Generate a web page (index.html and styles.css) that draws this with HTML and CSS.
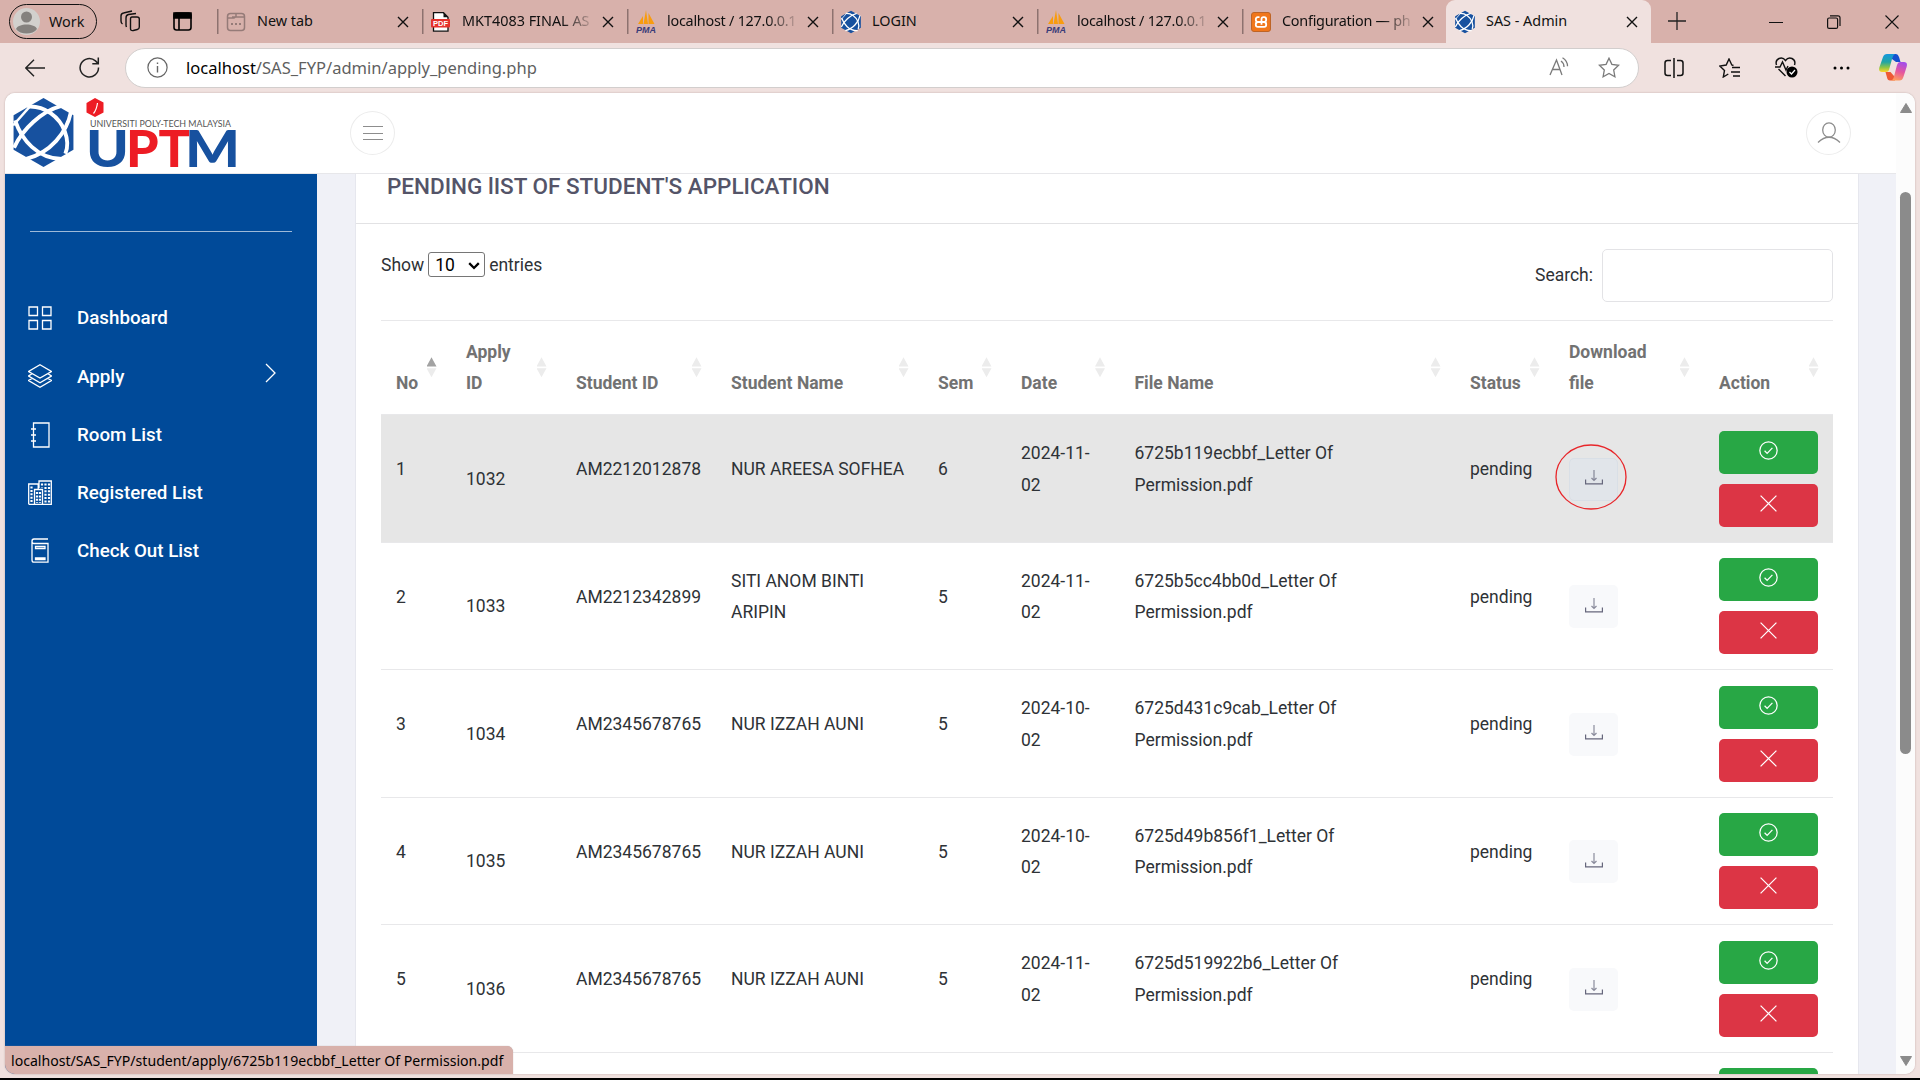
FILE: index.html
```html
<!DOCTYPE html>
<html lang="en">
<head>
<meta charset="utf-8">
<title>SAS - Admin</title>
<link rel="stylesheet" href="styles.css">
</head>
<body>
<svg class="defs" width="0" height="0">
  <defs>
    <symbol id="hex" viewBox="0 0 60 68">
      <path fill="#17519f" d="M30 0 59.500 17v34L30 68 .5 51V17z"/>
      <g fill="none" stroke="#fff" stroke-width="3.800">
        <path d="M14 8.500C31 7 46 19 51 33c3 8 3.500 15 .5 22"/>
        <path d="M47 8C28 13 9 31 1 49"/>
        <path d="M2 22C8 40 24 61 50 60"/>
        <path d="M57 14C53 34 37 54 13 60"/>
        <path d="M0 27 16 9" stroke-width="2.400"/>
      </g>
    </symbol>
    <symbol id="pma" viewBox="0 0 20 24">
      <path fill="#f89c0e" d="M2 14 7 6v8zM7.500 14 10 0l2 14zM12.500 14V3l6 11z"/>
      <text x="0" y="23" textLength="20" lengthAdjust="spacingAndGlyphs" font-family="Liberation Sans" font-size="9.500" font-weight="700" font-style="italic" fill="#3b3c78">PMA</text>
    </symbol>
    <symbol id="x" viewBox="0 0 12 12"><path d="m1 1 10 10M11 1 1 11" fill="none" stroke="#111" stroke-width="1.400"/></symbol>
    <symbol id="check" viewBox="0 0 18 18"><g fill="none" stroke="#fff" stroke-width="1.200"><circle cx="9" cy="9" r="8.200"/><path d="m5.300 9.300 2.400 2.400 5-5.200"/></g></symbol>
    <symbol id="cross" viewBox="0 0 18 18"><path d="m1.500 1.500 15 15M16.500 1.500l-15 15" fill="none" stroke="#fff" stroke-width="1.200"/></symbol>
    <symbol id="download" viewBox="0 0 18 18"><g fill="none" stroke="#66677c" stroke-width="1.200"><path d="M.6 11.500v4.400h16.800v-4.400"/><path d="M9 2v10M6.500 10 9 12.500l2.500-2.500" opacity=".75"/></g></symbol>
  </defs>
</svg>
<div class="browser">
  <div class="tabstrip">
    <div class="profile">
      <svg width="27" height="27" viewBox="0 0 27 27"><circle cx="13.500" cy="13.500" r="13.500" fill="#d2d0cd"/><circle cx="13.500" cy="9" r="5.500" fill="#85817e"/><path d="M3 21c2-6 19-6 21 0-4 6-17 6-21 0z" fill="#85817e"/></svg>
      <span>Work</span>
    </div>
    <svg class="workspaces" width="22" height="22" viewBox="0 0 22 22" fill="none" stroke="#111" stroke-width="1.400"><path d="M13 7h5q2.300 0 2.300 2v8q0 2-2 2.500l-4 1q-2.800.5-2.800-2V9q0-2 1.500-2zM7.500 17q-.5-1-.5-2V8q0-3 2.500-3.500L17 3.500M3.500 14Q2 13 2 11V6q0-2.500 2.500-3L13 1"/></svg>
    <svg class="tabactions" width="19" height="19" viewBox="0 0 19 19" fill="none" stroke="#000" stroke-width="1.600"><rect x="1" y="1" width="17" height="17" rx="2.500"/><path d="M1 1h17v5H1z" fill="#000"/><path d="M6 5v13"/></svg>
    <div class="tab"><svg class="fav" width="20" height="20" viewBox="0 0 20 20" fill="none" stroke="#957b78" stroke-width="1.500"><rect x="1.500" y="1.500" width="17" height="17" rx="3"/><path d="M2 6h6l2-1.500V2M6 5h12"/><path d="M5 12h10" stroke-width="2" stroke-dasharray="2 2"/></svg><span class="label">New tab</span><svg class="close"><use href="#x"/></svg></div>
    <div class="tab"><svg class="fav" width="20" height="20" viewBox="0 0 20 20"><path d="M2.500.7h10l4.500 4.500v14H2.500z" fill="#fff" stroke="#111" stroke-width="1.300"/><path d="M12.500.7v4.500H17" fill="#111"/><rect x="0" y="7" width="19" height="8.500" rx="1" fill="#e5322d"/><text x="2" y="14" textLength="15" lengthAdjust="spacingAndGlyphs" font-family="Liberation Sans" font-size="7.500" font-weight="700" fill="#fff">PDF</text></svg><span class="label fade wide">MKT4083 FINAL AS</span><svg class="close"><use href="#x"/></svg></div>
    <div class="tab"><svg class="fav pma"><use href="#pma"/></svg><span class="label fade">localhost / 127.0.0.1</span><svg class="close"><use href="#x"/></svg></div>
    <div class="tab"><svg class="fav hx"><use href="#hex"/></svg><span class="label">LOGIN</span><svg class="close"><use href="#x"/></svg></div>
    <div class="tab"><svg class="fav pma"><use href="#pma"/></svg><span class="label fade">localhost / 127.0.0.1</span><svg class="close"><use href="#x"/></svg></div>
    <div class="tab"><svg class="fav" width="20" height="20" viewBox="0 0 20 20"><rect x=".5" y=".5" width="19" height="19" rx="2.500" fill="#f0761b" stroke="#bd6427"/><path d="M8.500 5.200H6.800Q4.800 5.200 4.800 7.600T7 10Q4.800 10 4.800 12.400t2 2.400h6.400q2 0 2-2.400T13 10q2.200 0 2.200-2.400t-2-2.400h-.7q-2 0-2 2v5.600M7 10h6" fill="none" stroke="#fff" stroke-width="1.800"/></svg><span class="label fade">Configuration — ph</span><svg class="close"><use href="#x"/></svg></div>
    <div class="tab active"><svg class="fav hx"><use href="#hex"/></svg><span class="label">SAS - Admin</span><svg class="close"><use href="#x"/></svg></div>
    <svg class="newtab" width="18" height="18" viewBox="0 0 18 18"><path d="M9 0v18M0 9h18" stroke="#222" stroke-width="1.300"/></svg>
    <div class="winbtns">
      <svg width="14" height="14" viewBox="0 0 14 14"><path d="M0 7.500h14" stroke="#111"/></svg>
      <svg width="14" height="14" viewBox="0 0 14 14" fill="none" stroke="#111" stroke-width="1.200"><rect x=".6" y="3" width="10" height="10.400" rx="1.500"/><path d="M3 .8h8q2 0 2 2V11"/></svg>
      <svg width="14" height="14" viewBox="0 0 14 14"><path d="m.5.5 13 13M13.500.5l-13 13" stroke="#111" stroke-width="1.100"/></svg>
    </div>
  </div>
  <div class="toolbar">
    <svg class="back" width="20" height="18" viewBox="0 0 20 18" fill="none" stroke="#222" stroke-width="1.400"><path d="M20 9H1M9 .8.800 9 9 17.200"/></svg>
    <svg class="reload" width="21" height="21" viewBox="0 0 21 21" fill="none" stroke="#222" stroke-width="1.500"><path d="M19.500 10.500a9.200 9.200 0 1 1-3-6.600L19 6.500M19.300.5v6.300h-6"/></svg>
    <div class="address">
      <svg width="21" height="21" viewBox="0 0 21 21" fill="none" stroke="#666" stroke-width="1.200"><circle cx="10.500" cy="10.500" r="9.600"/><path d="M10.500 9v6.500M10.500 5.500v1.600" stroke-width="1.400"/></svg>
      <span class="url"><b>localhost</b>/SAS_FYP/admin/apply_pending.php</span>
      <svg class="read" width="20" height="19" viewBox="0 0 20 19" fill="none" stroke="#7a7a7a" stroke-width="1.300"><path d="M1 18 7.500 3 13 18M3 12.500h8M12 4q3 2 3 6M13.500.7q5 3 5 8.500"/></svg>
      <svg class="star" width="22" height="21" viewBox="0 0 22 21" fill="none" stroke="#7a7a7a" stroke-width="1.300"><path d="m11 1.200 2.900 6.200 6.700.9-4.900 4.700 1.200 6.700-5.900-3.200-5.900 3.200 1.200-6.700L1.400 8.300l6.700-.9z"/></svg>
    </div>
    <svg width="20" height="20" viewBox="0 0 20 20" fill="none" stroke="#111" stroke-width="1.500"><path d="M7 2.500H3.500Q1 2.500 1 5v10q0 2.500 2.500 2.500H7M13 2.500h3.500Q19 2.500 19 5v10q0 2.500-2.500 2.500H13M10 0v20"/></svg>
    <svg width="21" height="20" viewBox="0 0 21 20" fill="none" stroke="#111" stroke-width="1.400"><path d="M14.500 7.500 12.800 7 10 1 7.200 7 .8 8 5.500 12.500 4.300 19l5-3M13 9.500h8M12 14h9M14 18h7" /></svg>
    <svg width="23" height="21" viewBox="0 0 23 21" fill="none" stroke="#111" stroke-width="1.400"><path d="M1.500 8Q0 3.500 4 1.500q4-1.500 6.500 2 2.500-3.500 6.500-2 4 2 2.500 6.500M3.500 12l7 7M0 10h5l2.500-5 3.500 8 2-4"/><circle cx="17" cy="15" r="5.500" fill="#000" stroke="none"/><path d="m14.500 15 2 2 3.500-4" stroke="#fff" stroke-width="1.200"/></svg>
    <svg width="17" height="4" viewBox="0 0 17 4"><circle cx="2" cy="2" r="1.500"/><circle cx="8.500" cy="2" r="1.500"/><circle cx="15" cy="2" r="1.500"/></svg>
    <svg class="copilot" width="28" height="27" viewBox="0 0 28 27">
      <defs>
        <linearGradient id="ca" x1="0" y1="0" x2="0" y2="1"><stop offset="0" stop-color="#1596dd"/><stop offset=".45" stop-color="#21a5a4"/><stop offset=".75" stop-color="#8fc545"/><stop offset="1" stop-color="#ffd52a"/></linearGradient>
        <linearGradient id="cb" x1=".6" y1="0" x2=".3" y2="1"><stop offset="0" stop-color="#a44ee8"/><stop offset=".5" stop-color="#e6579d"/><stop offset="1" stop-color="#ffa15c"/></linearGradient>
      </defs>
      <path d="M12 0h5q2 0 3 3l1.500 5H17L13 5z" fill="#154fcf"/>
      <path d="M8 0h8q-2 1-3 5L10 16q-.6 2-3 2H3q-4 0-2.500-5L4 3Q5 0 8 0z" fill="url(#ca)"/>
      <path d="M6.500 18h5L15 22l1 4.500h-5q-2.500 0-3-3z" fill="#ee5a35"/>
      <path d="M21 8h4q4 0 2.600 5l-3.200 10q-1 3.500-4 3.500H12q2.300-.5 3-4L18 11q.8-3 3-3z" fill="url(#cb)"/>
    </svg>
  </div>
  <div class="viewport">
    <div class="page">
      <header class="topbar">
        <svg class="logo" width="236" height="72" viewBox="0 0 236 72">
          <use href="#hex" x="4" y="2" width="61" height="69"/>
          <path d="M86 2 94.500 6.500v10L86 21l-8.500-4.500V7z" fill="#ed1c24"/><path d="M88.500 7q-1 7-4 10.500" stroke="#fff" stroke-width="1.200" fill="none"/>
          <text x="81" y="31" textLength="141" lengthAdjust="spacingAndGlyphs" class="uni">UNIVERSITI POLY-TECH MALAYSIA</text>
          <g class="uptm">
            <text x="77" y="71" textLength="43" lengthAdjust="spacingAndGlyphs" fill="#17519f">U</text>
            <text x="117" y="71" textLength="64" lengthAdjust="spacingAndGlyphs" fill="#ed1c24">PT</text>
            <text x="176" y="71" textLength="55" lengthAdjust="spacingAndGlyphs" fill="#17519f">M</text>
          </g>
        </svg>
        <div class="round"><svg width="20" height="16" viewBox="0 0 20 16"><path d="M0 1.500h20M0 8.500h20M0 14.500h20" stroke="#8d8d8d" stroke-width="1.200"/></svg></div>
        <div class="round user"><svg width="24" height="22" viewBox="0 0 24 22" fill="none" stroke="#8d8d8d" stroke-width="1.300"><ellipse cx="12" cy="8" rx="6.300" ry="7.200"/><path d="M1 20.500q11-10.500 22 0"/></svg></div>
      </header>
      <div class="body">
        <nav class="sidebar">
          <hr>
          <a class="item"><svg width="24" height="24" viewBox="0 0 24 24"><path d="M1 1h8.500v8.500H1zM14.500 1H23v8.500h-8.500zM1 14.500h8.500V23H1zM14.500 14.500H23V23h-8.500z"/></svg><span>Dashboard</span></a>
          <a class="item apply"><svg width="24" height="24" viewBox="0 0 24 24"><path d="m12 .8 11.400 6.700L12 14 .6 7.500zM4 9.800.6 12 12 18.700 23.400 12 20 9.800M4 14.500.6 16.500 12 23.200l11.400-6.700-3.400-2"/></svg><span>Apply</span><svg class="chev" width="12" height="20" viewBox="0 0 12 20"><path d="m1 1 9 9-9 9"/></svg></a>
          <a class="item"><svg width="24" height="26" viewBox="0 0 24 26"><path d="M5.500 1H21v24H5.500zM3 7h5M3 13h5M3 19h5"/></svg><span>Room List</span></a>
          <a class="item"><svg width="24" height="25" viewBox="0 0 24 25"><path d="M.7 24.300V4h9.500v5M11 8V1h12.300v23.300H.7M6.500 24V9.500h8V24"/><path d="M3.500 6.500v16M14 3.500v4M17.500 3.500v19M21 3.500v19M9 12v11M12 12v11" stroke-width="2.200" stroke-dasharray="2 1.400"/></svg><span>Registered List</span></a>
          <a class="item"><svg width="24" height="25" viewBox="0 0 24 25"><path d="M20 1H6Q4 1 4 3.200V22q0 2.200 2 2.200h14V5.500H6Q4 5.500 4 3.200M7.500 8.500h9.500v2H7.500zM7.500 20h9.500v1.500H7.500z"/></svg><span>Check Out List</span></a>
        </nav>
        <main class="main">
          <section class="card">
            <h4 class="title">PENDING lIST OF STUDENT'S APPLICATION</h4>
            <div class="content">
              <div class="controls">
                <div class="length"><span>Show</span><span class="select">10<svg width="12" height="8" viewBox="0 0 10 7"><path d="m.8 1 4.200 4.200L9.200 1" fill="none" stroke="#000" stroke-width="2"/></svg></span><span class="entries">entries</span></div>
                <label class="search">Search:<input type="text"></label>
              </div>
              <div class="row head">
                <div>No<i class="sort asc"></i></div><div>Apply<br>ID<i class="sort"></i></div><div>Student ID<i class="sort"></i></div><div>Student Name<i class="sort"></i></div><div>Sem<i class="sort"></i></div><div>Date<i class="sort"></i></div><div>File Name<i class="sort"></i></div><div>Status<i class="sort"></i></div><div>Download<br>file<i class="sort"></i></div><div>Action<i class="sort"></i></div>
              </div>
              <div class="row hover"><div>1</div><div class="mid">1032</div><div>AM2212012878</div><div>NUR AREESA SOFHEA</div><div>6</div><div>2024-11-<br>02</div><div>6725b119ecbbf_Letter Of<br>Permission.pdf</div><div>pending</div><div class="mid"><a class="dl"><svg><use href="#download"/></svg><svg class="ring" viewBox="0 0 72 66"><ellipse cx="36" cy="33" rx="35" ry="32"/></svg></a></div><div class="act"><a class="ok"><svg><use href="#check"/></svg></a><a class="no"><svg><use href="#cross"/></svg></a></div></div>
              <div class="row"><div>2</div><div class="mid">1033</div><div>AM2212342899</div><div>SITI ANOM BINTI<br>ARIPIN</div><div>5</div><div>2024-11-<br>02</div><div>6725b5cc4bb0d_Letter Of<br>Permission.pdf</div><div>pending</div><div class="mid"><a class="dl"><svg><use href="#download"/></svg></a></div><div class="act"><a class="ok"><svg><use href="#check"/></svg></a><a class="no"><svg><use href="#cross"/></svg></a></div></div>
              <div class="row"><div>3</div><div class="mid">1034</div><div>AM2345678765</div><div>NUR IZZAH AUNI</div><div>5</div><div>2024-10-<br>02</div><div>6725d431c9cab_Letter Of<br>Permission.pdf</div><div>pending</div><div class="mid"><a class="dl"><svg><use href="#download"/></svg></a></div><div class="act"><a class="ok"><svg><use href="#check"/></svg></a><a class="no"><svg><use href="#cross"/></svg></a></div></div>
              <div class="row"><div>4</div><div class="mid">1035</div><div>AM2345678765</div><div>NUR IZZAH AUNI</div><div>5</div><div>2024-10-<br>02</div><div>6725d49b856f1_Letter Of<br>Permission.pdf</div><div>pending</div><div class="mid"><a class="dl"><svg><use href="#download"/></svg></a></div><div class="act"><a class="ok"><svg><use href="#check"/></svg></a><a class="no"><svg><use href="#cross"/></svg></a></div></div>
              <div class="row"><div>5</div><div class="mid">1036</div><div>AM2345678765</div><div>NUR IZZAH AUNI</div><div>5</div><div>2024-11-<br>02</div><div>6725d519922b6_Letter Of<br>Permission.pdf</div><div>pending</div><div class="mid"><a class="dl"><svg><use href="#download"/></svg></a></div><div class="act"><a class="ok"><svg><use href="#check"/></svg></a><a class="no"><svg><use href="#cross"/></svg></a></div></div>
              <div class="row"><div></div><div></div><div></div><div></div><div></div><div></div><div></div><div></div><div></div><div class="act"><a class="ok"></a></div></div>
            </div>
          </section>
        </main>
      </div>
    </div>
    <div class="scrollbar">
      <svg width="12" height="10" viewBox="0 0 12 10"><path d="M6 .5 11.500 9.500H.5z" fill="#8b8b8b" stroke="#8b8b8b" stroke-linejoin="round"/></svg>
      <div class="thumb"></div>
      <svg width="12" height="10" viewBox="0 0 12 10"><path d="M6 9.500 11.500.5H.5z" fill="#8b8b8b" stroke="#8b8b8b" stroke-linejoin="round"/></svg>
    </div>
    <div class="status"><span>localhost/SAS_FYP/student/apply/6725b119ecbbf_Letter Of Permission.pdf</span></div>
  </div>
</div>
</body>
</html>
```
FILE: styles.css
```css
* { box-sizing: border-box; }
body { margin: 0; background: #000; font-family: Roboto, sans-serif; }
svg { display: block; flex: none; }
.defs { position: absolute; }
.browser { width: 1920px; height: 1078px; overflow: hidden; display: flex; flex-direction: column; background: #f0e1df; }

.tabstrip { height: 43px; flex: none; display: flex; align-items: center; background: #d8b1ab; font: 14.400px "Noto Sans", sans-serif; color: #111; }
.profile { width: 88px; height: 35px; margin: 0 0 1px 9px; border: 1.500px solid #111; border-radius: 18px; display: flex; align-items: center; gap: 9px; padding-left: 3px; }
.workspaces { margin: 0 0 1px 22px; }
.tabactions { margin: 0 25px 1px 32px; }
.tab { width: 205px; height: 43px; flex: none; display: flex; align-items: center; padding: 0 13px 0 9px; background: linear-gradient(#8d726f, #8d726f) 0 9px / 1.500px 25px no-repeat; }
.tab.active { background: #f0e1df; border-radius: 9px 9px 0 0; margin-left: -1px; }
.fav { margin-right: 11px; }
.pma, .hx { width: 20px; height: 24px; margin-top: 1px; }
.label { flex: 1; white-space: nowrap; line-height: 24px; margin-bottom: 1px; }
.fade { letter-spacing: -.25px; -webkit-mask-image: linear-gradient(90deg, #000 100px, transparent 134px); mask-image: linear-gradient(90deg, #000 100px, transparent 134px); }
.fade.wide { letter-spacing: 0; }
.close { width: 12px; height: 12px; }
.newtab { margin: 0 0 1px 17px; }
.winbtns { margin: 0 0 0 83px; display: flex; gap: 44px; }

.toolbar { height: 50px; flex: none; display: flex; align-items: center; padding: 0 0 1px 25px; }
.reload { margin-left: 34px; }
.address { width: 1514px; height: 40px; margin: 0 25px; background: #fff; border: 1.500px solid #d2cecd; border-radius: 20px; display: flex; align-items: center; padding-left: 21px; }
.url { flex: 1; margin: 0 0 1px 18px; font: 16.550px "Noto Sans", sans-serif; color: #5f5f5f; }
.url b { font-weight: 400; color: #000; }
.read { margin: 0 29px 2px 0; }
.star { margin-right: 18px; }
.toolbar > svg + svg:not(.reload) { margin-left: 35px; }
.toolbar > .copilot { margin-left: 29px !important; }

.viewport { position: relative; width: 1910px; height: 981px; margin-left: 5px; display: flex; border-radius: 10px; overflow: hidden; background: #fff; box-shadow: 0 0 2px #b9a5a3; }
.page { width: 1891px; display: flex; flex-direction: column; }
.topbar { height: 81px; flex: none; display: flex; align-items: center; border-bottom: 1px solid #e7e7ea; background: #fff; }
.logo { margin-left: 4px; margin-top: -2px; overflow: visible; }
.uni { font: 9.500px Lato, sans-serif; fill: #555; }
.uptm { font: 900 52px Lato, sans-serif; }
.round { width: 45px; height: 44px; margin-left: 105px; border: 1px solid #ececec; border-radius: 50%; display: flex; align-items: center; justify-content: center; }
.user { margin-left: auto; margin-right: 45px; }

.body { flex: 1; min-height: 0; display: flex; }
.sidebar { width: 312px; flex: none; background: #004a99; display: flex; flex-direction: column; padding: 57px 25px 0 23px; }
.sidebar hr { width: 262px; margin: 0 0 57px 2px; border: 0; border-top: 1px solid #9db9d8; }
.item { height: 58px; display: flex; align-items: center; gap: 25px; color: #fff; font-weight: 500; font-size: 18.750px; }
.item svg { fill: none; stroke: #fff; stroke-width: 1.300; margin-bottom: 1px; }
.item.apply { margin-top: 1px; }
.item.apply svg { margin-bottom: 3px; }
.item .chev { margin: -5px 15px 0 auto; }
.main { flex: 1; padding-left: 38px; background: #f0f1f7; overflow: hidden; }
.card { width: 1504px; height: 900px; overflow: hidden; background: #fff; border: solid #e6e7ee; border-width: 0 1px; }
.title { margin: 0; height: 50px; padding: 0 0 0 31px; border-bottom: 1px solid #e2e2e4; font-weight: 500; font-size: 22.500px; line-height: 24px; color: #545468; }
.content { padding: 0 25px; font-size: 17.500px; line-height: 31.500px; color: #2e3236; }
.controls { height: 96px; display: flex; justify-content: space-between; align-items: flex-start; padding-top: 25px; }
.length { display: flex; align-items: center; gap: 4px; padding-top: 1px; }
.select { width: 57px; height: 25px; margin-top: -2px; border: 1px solid #767676; border-radius: 3px; display: flex; align-items: center; justify-content: space-between; padding: 2px 4px 0 6px; color: #000; }
.search { display: flex; align-items: center; gap: 9px; line-height: 33px; }
.search input { width: 231px; height: 53px; border: 1px solid #e3e3e6; border-radius: 5px; background: #fff; }

.row { display: grid; grid-template-columns: 70px 110px 155px 207px 83px 113.500px 335.500px 99px 150px 129px; height: 127.500px; border-top: 1px solid #e8e8ea; }
.row > div { padding: 1px 0 18px 15px; display: flex; flex-direction: row; align-items: center; white-space: nowrap; }
.row > .mid { padding: 2px 0 0 15px; }
.row.hover { background: #e6e6e6; }
.row.head { height: 94.200px; }
.row.head > div { font-weight: 700; color: #727272; justify-content: space-between; align-items: flex-end; padding-bottom: 14.500px; padding-right: 14.500px; }
.sort { width: 10px; height: 20px; align-self: center; margin-top: 13px; background: #ececec; clip-path: polygon(50% 0, 100% 46%, 0 46%, 0 54%, 100% 54%, 50% 100%, 0 54%, 0 46%); }
.sort.asc { background: linear-gradient(#a2a2a2 50%, #ececec 50%); }
.dl { position: relative; width: 49px; height: 43px; border-radius: 5px; background: #f8f9fb; display: flex; align-items: center; justify-content: center; }
.dl svg { width: 18px; height: 18px; margin-top: -4px; }
.hover .dl { background: #e1e5ea; border: 1px solid #d9dfe6; }
.dl .ring { position: absolute; left: -15px; top: -11px; width: 72px; height: 66px; fill: none; stroke: #e8262a; stroke-width: 1.300; }
.row > .act { flex-direction: column; align-items: stretch; gap: 10px; padding: 15.400px 15px 0 15px; }
.act a { height: 43px; flex: none; border-radius: 5px; display: flex; justify-content: center; padding-top: 10px; }
.act svg { width: 19px; height: 19px; }
.ok { background: #28a745; }
.no { background: #dc3545; }

.scrollbar { width: 19px; display: flex; flex-direction: column; align-items: center; background: #fcfcfc; padding: 10px 0 8px; }
.thumb { width: 11px; height: 562px; margin: 79px 0 auto; border-radius: 6px; background: #8b8b8b; }
.status { position: absolute; left: 0; bottom: 0; width: 508px; height: 28px; padding-left: 6px; background: #d8b1ab; border-radius: 0 6px 0 8px; font: 14.100px/29px "Noto Sans", sans-serif; color: #000; white-space: nowrap; box-shadow: 0 0 1px #a99; }
```
